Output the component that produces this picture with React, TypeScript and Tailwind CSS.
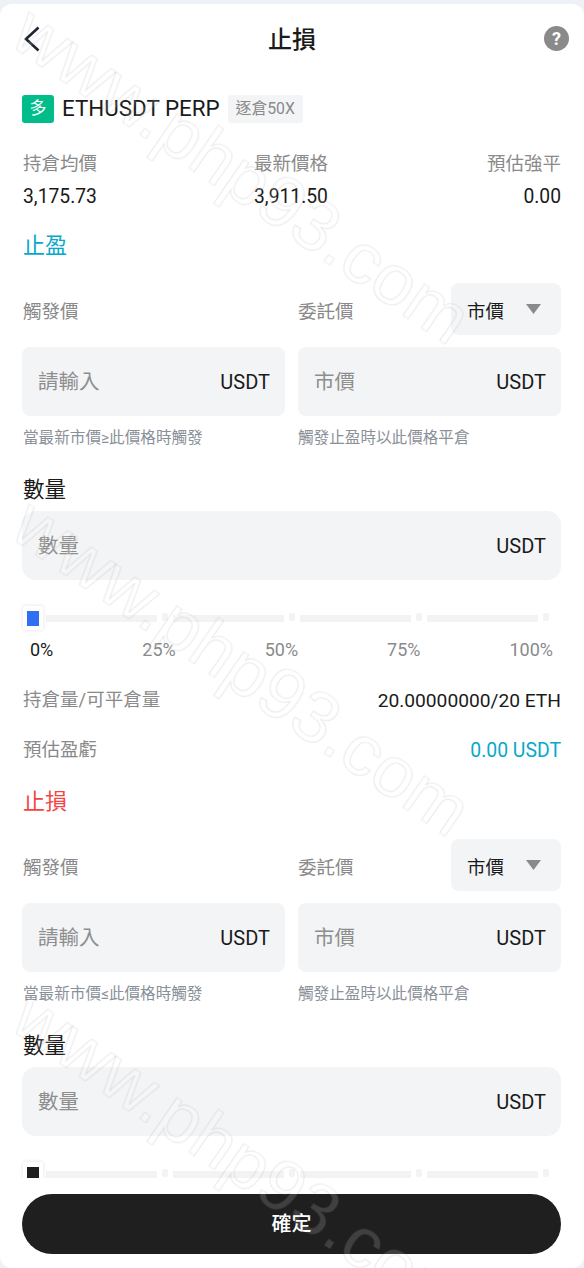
const cjk = "font-['Roboto','Noto_Sans_CJK_TC',sans-serif]";

function Field({ placeholder, wide }: { placeholder: string; wide?: boolean }) {
  return (
    <div className={`flex h-[69px] items-center justify-between bg-[#f3f4f6] pl-[16px] pr-[15px] ${wide ? "rounded-[14px]" : "rounded-lg"}`}>
      <span className="pt-[2px] text-[20.5px] text-[#8e8e8e]">{placeholder}</span>
      <span className="text-[20px] text-[#1a1a1a]">USDT</span>
    </div>
  );
}

function Slider({ thumb }: { thumb: string }) {
  return (
    <div className="relative flex h-[24px] items-center pl-[1px]">
      <div className="z-10 flex h-[24px] w-[20px] items-center justify-center rounded-[3px] bg-white shadow-[0_0_4px_rgba(0,0,0,0.12)]">
        <div className={`h-[15px] w-[12px] ${thumb}`} />
      </div>
      <div className="ml-[3px] flex items-center">
        {[0, 1, 2, 3].map((i) => (
          <div key={i} className="flex items-center">
            <div className="h-[7px] w-[111px] bg-[#f3f3f3]" />
            <div className="mx-[5px] mb-[2px] h-[8px] w-[6px] rounded-[2px] bg-[#f3f3f3]" />
          </div>
        ))}
      </div>
    </div>
  );
}

function OrderBlock({
  title,
  titleColor,
  op,
}: {
  title: string;
  titleColor: string;
  op: string;
}) {
  return (
    <section>
      <div className={`h-[30px] pl-[1px] text-[22px] leading-[30px] ${titleColor}`}>{title}</div>
      <div className="mt-[22px] grid h-[52px] grid-cols-2 gap-[13px]">
        <div className="flex items-center pl-[1px] pt-[8px] text-[18.5px] text-[#8a8a8a]">觸發價</div>
        <div className="flex items-center justify-between">
          <span className="pt-[8px] text-[18.5px] text-[#8a8a8a]">委託價</span>
          <div className="flex h-[52px] w-[110px] items-center justify-between rounded-lg bg-[#f3f4f6] pl-[16px] pr-[20px]">
            <span className="pt-[8px] text-[18.5px] text-[#1a1a1a]">市價</span>
            <svg width="15" height="10" viewBox="0 0 15 10">
              <path d="M0 0h15L7.5 10z" fill="#8a8a8a" />
            </svg>
          </div>
        </div>
      </div>
      <div className="mt-[12px] grid grid-cols-2 gap-[13px]">
        <Field placeholder="請輸入" />
        <Field placeholder="市價" />
      </div>
      <div className="mt-[12px] grid h-[21px] grid-cols-2 gap-[13px] text-[15.6px] leading-[21px] text-[#8a9099]">
        <span className="pl-[1px]">{op}</span>
        <span>觸發止盈時以此價格平倉</span>
      </div>
      <div className="mt-[26px] h-[30px] pl-[1px] text-[21.5px] leading-[30px] text-[#1a1a1a]">數量</div>
      <div className="mt-[6px]">
        <Field placeholder="數量" wide />
      </div>
    </section>
  );
}

const marks = ["25%", "50%", "75%", "100%"];

export default function App() {
  return (
    <div className={`relative h-[1268px] w-[584px] overflow-hidden bg-[#eef1f6] pt-[4px] ${cjk}`}>
      <div className="flex h-[1264px] flex-col overflow-hidden rounded-[12px] bg-white">
        {/* header */}
        <header className="relative flex h-[70px] shrink-0 items-center justify-between pl-[24px] pr-[15px]">
          <svg width="16" height="26" viewBox="0 0 16 26" fill="none" className="-mt-[1px]">
            <path d="M14.5 1.5L2 13l12.5 11.5" stroke="#1f2430" strokeWidth="2.6" />
          </svg>
          <span className="absolute left-0 right-0 mt-[1px] text-center text-[24px] font-medium text-[#1a1a1a]">止損</span>
          <span className="-mt-[1px] flex h-[25px] w-[25px] items-center justify-center rounded-full bg-[#8a8a8a] text-[18px] font-bold text-white">?</span>
        </header>

        <main className="min-h-0 flex-1 overflow-hidden pl-[22px] pr-[23px]">
          <div className="mt-[21px] flex h-[28px] items-center">
            <span className="flex h-[28px] w-[32px] items-center justify-center rounded-[3px] bg-[#00bd8a] text-[17px] text-white">多</span>
            <span className="ml-[8px] text-[22.4px] text-[#1a1a1a]">ETHUSDT PERP</span>
            <span className="ml-[8px] flex h-[28px] w-[75px] items-center justify-center rounded-[3px] bg-[#f3f4f6] text-[15.8px] text-[#8a8a8a]">逐倉50X</span>
          </div>

          <div className="mt-[27px] flex justify-between leading-[28px]">
            <div className="w-[232px] pl-[1px]">
              <div className="text-[18.5px] text-[#8a8a8a]">持倉均價</div>
              <div className="mt-[5px] text-[19.3px] text-[#1a1a1a]">3,175.73</div>
            </div>
            <div className="flex-1">
              <div className="text-[18.5px] text-[#8a8a8a]">最新價格</div>
              <div className="mt-[5px] text-[19.3px] text-[#1a1a1a]">3,911.50</div>
            </div>
            <div className="text-right">
              <div className="text-[18.5px] text-[#8a8a8a]">預估強平</div>
              <div className="mt-[5px] text-[19.3px] text-[#1a1a1a]">0.00</div>
            </div>
          </div>

          <div className="mt-[20px]">
            <OrderBlock title="止盈" titleColor="text-[#06a9c9]" op="當最新市價≥此價格時觸發" />
          </div>

          <div className="mt-[26px]">
            <Slider thumb="bg-[#2f6ff2]" />
          </div>
          <div className="mt-[5px] flex h-[28px] items-center justify-between px-[8px] text-[18px] text-[#8a8a8a]">
            <span className="text-[#1a1a1a]">0%</span>
            {marks.map((m) => (
              <span key={m}>{m}</span>
            ))}
          </div>

          <div className="mt-[24px] flex h-[28px] items-center justify-between">
            <span className="pl-[1px] text-[18.5px] text-[#8a8a8a]">持倉量/可平倉量</span>
            <span className="text-[19.2px] text-[#1a1a1a]">20.00000000/20 ETH</span>
          </div>
          <div className="mt-[22px] flex h-[28px] items-center justify-between">
            <span className="pl-[1px] text-[18.5px] text-[#8a8a8a]">預估盈虧</span>
            <span className="text-[19.4px] text-[#06a9c9]">0.00 USDT</span>
          </div>

          <div className="mt-[22px]">
            <OrderBlock title="止損" titleColor="text-[#f44545]" op="當最新市價≤此價格時觸發" />
          </div>
          <div className="mt-[26px]">
            <Slider thumb="bg-[#1f1f1f]" />
          </div>
        </main>

        <footer className="shrink-0 pb-[14px] pl-[22px] pr-[23px] pt-[16px]">
          <button className="h-[60px] w-full rounded-full bg-[#1f1f1f] text-[20px] font-medium text-white">確定</button>
        </footer>
      </div>

      {/* watermark */}
      <div className="pointer-events-none absolute inset-0 overflow-hidden font-['Liberation_Sans',sans-serif]">
        {["-top-[14px]", "top-[478px]", "top-[970px]"].map((pos) => (
          <span
            key={pos}
            className={`absolute left-[22px] ${pos} origin-left rotate-[34.5deg] whitespace-nowrap text-[73px] leading-none text-white/15 blur-[0.4px] [-webkit-text-stroke:1.2px_rgba(0,0,0,0.08)]`}
          >
            www.php93.com
          </span>
        ))}
      </div>
    </div>
  );
}
